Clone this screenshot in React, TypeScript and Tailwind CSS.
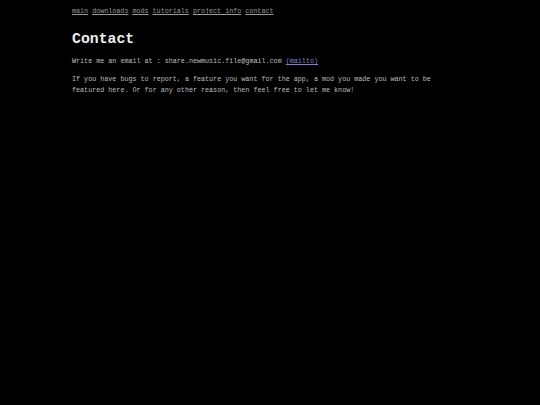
import React from 'react'

const links = ['main', 'downloads', 'mods', 'tutorials', 'project info', 'contact']

export default function App() {
    return (
        <div className="min-h-[405px] w-full bg-black font-['Courier_New','Liberation_Mono',monospace] text-[6.72px] text-[#bdbdbd]">
            <div className="ml-[72px] w-[380px] pt-[7px]">
                <nav className="flex gap-[4px] leading-[8px]">
                    {links.map((l) => (
                        <a key={l} href="#" className="text-[#9a9a9a] underline">
                            {l}
                        </a>
                    ))}
                </nav>
                <h1 className="mt-[15px] text-[14.8px] font-bold leading-[18px] text-[#eeeeee]">Contact</h1>
                <p className="mt-[8px] leading-[11px]">
                    Write me an email at : share.newmusic.file@gmail.com{' '}
                    <a href="#" className="text-[#8080d0] underline">
                        (mailto)
                    </a>
                </p>
                <p className="mt-[7px] leading-[11px]">
                    If you have bugs to report, a feature you want for the app, a mod you made you want to be featured
                    here. Or for any other reason, then feel free to let me know!
                </p>
            </div>
        </div>
    )
}
